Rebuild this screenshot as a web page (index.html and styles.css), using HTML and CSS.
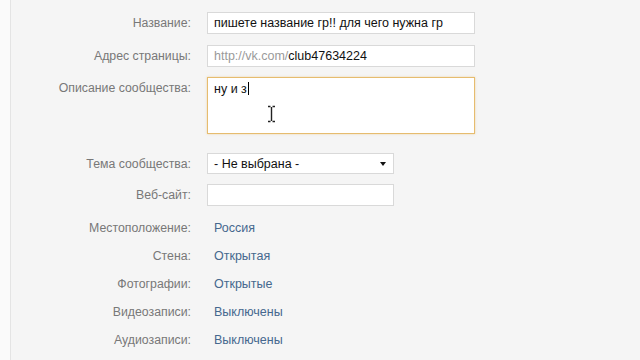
FILE: index.html
```html
<!DOCTYPE html>
<html lang="ru">
<head>
  <meta charset="UTF-8" />
  <title>Редактирование сообщества</title>
  <link rel="stylesheet" href="styles.css">
</head>
<body>
  <div class="page">
    <div class="form">
      <div class="row row-name">
        <div class="label">Название:</div>
        <div class="field wide">пишете название гр!! для чего нужна гр</div>
      </div>
      <div class="row row-addr">
        <div class="label">Адрес страницы:</div>
        <div class="field wide"><span class="prefix">http://vk.com/</span>club47634224</div>
      </div>
      <div class="row row-desc">
        <div class="label">Описание сообщества:</div>
        <div class="field wide area">ну и з<span class="caret"></span>
          <svg class="ibeam" width="9" height="18" viewBox="0 0 9 18">
            <path d="M1 1.5h2.5M5.5 1.5H8M4.5 2v14M1 16.5h2.5M5.5 16.5H8" stroke="#222" stroke-width="1.4" fill="none"/>
          </svg>
        </div>
      </div>
      <div class="row row-theme">
        <div class="label">Тема сообщества:</div>
        <div class="field narrow select">- Не выбрана -<span class="arrow"></span></div>
      </div>
      <div class="row row-site">
        <div class="label">Веб-сайт:</div>
        <div class="field narrow"></div>
      </div>
      <div class="row row-info row-first">
        <div class="label">Местоположение:</div>
        <div class="value">Россия</div>
      </div>
      <div class="row row-info">
        <div class="label">Стена:</div>
        <div class="value">Открытая</div>
      </div>
      <div class="row row-info">
        <div class="label">Фотографии:</div>
        <div class="value">Открытые</div>
      </div>
      <div class="row row-info">
        <div class="label">Видеозаписи:</div>
        <div class="value">Выключены</div>
      </div>
      <div class="row row-info">
        <div class="label">Аудиозаписи:</div>
        <div class="value">Выключены</div>
      </div>
    </div>
  </div>
</body>
</html>
```
FILE: styles.css
```css
* {
  box-sizing: border-box;
}

body {
  margin: 0;
  background: #fafafa;
  font-family: "Liberation Sans", Arial, sans-serif;
  font-size: 12px;
  height: 360px;
  overflow: hidden;
}

.page {
  margin-left: 10px;
  border-left: 1px solid #e4e4e4;
  background: #f5f5f5;
  height: 360px;
}

.form {
  display: flex;
  flex-direction: column;
}

.row {
  display: flex;
  align-items: flex-start;
}

.label {
  width: 180px;
  text-align: right;
  color: #787878;
  font-size: 12.3px;
  line-height: 22px;
  margin-right: 16px;
  white-space: nowrap;
}

.field {
  position: relative;
  background: #fff;
  border: 1px solid #d9d9d9;
  height: 22px;
  line-height: 20px;
  padding: 0 6px;
  color: #111;
  font-size: 12.5px;
  white-space: nowrap;
}

.wide { width: 268px; }
.narrow { width: 187px; }

.prefix { color: #9a9a9a; }

.area {
  height: 57px;
  padding-top: 1px;
  border-color: #e6bc6f;
  box-shadow: 0 0 2px rgba(230, 180, 90, 0.5);
}

.caret {
  display: inline-block;
  width: 1px;
  height: 13px;
  background: #000;
  vertical-align: -2px;
  margin-left: 1px;
}

.ibeam {
  position: absolute;
  left: 59px;
  top: 27px;
}

.select .arrow {
  position: absolute;
  right: 7px;
  top: 8px;
  border-left: 3.5px solid transparent;
  border-right: 3.5px solid transparent;
  border-top: 4px solid #111;
}

.row-name { margin-top: 12px; }
.row-addr { margin-top: 11px; }
.row-desc { margin-top: 10px; }
.row-theme { margin-top: 19px; }
.row-theme .field { height: 21px; }
.row-site { margin-top: 9px; }

.row-first { margin-top: 8px; }

.row-info .label,
.row-info .value {
  line-height: 28px;
}

.value {
  color: #45688e;
  padding-left: 7px;
  font-size: 12.5px;
}
```
